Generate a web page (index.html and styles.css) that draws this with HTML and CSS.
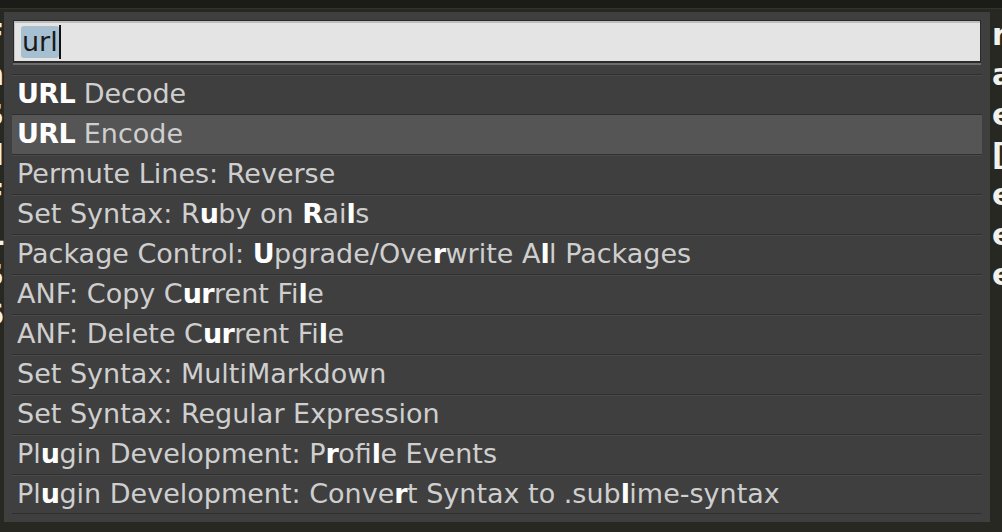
FILE: index.html
```html
<!DOCTYPE html>
<html>
<head>
<meta charset="utf-8">
<link rel="stylesheet" href="styles.css">
</head>
<body>
<div class="screen">
  <div class="topbar"></div>
  <div class="editor">
    <div class="eline"><span class="l">F</span><span class="r">r</span></div>
    <div class="eline"><span class="l">n</span><span class="r">a</span></div>
    <div class="eline"><span class="l">S</span><span class="r">e</span></div>
    <div class="eline"><span class="l">H</span><span class="r">[</span></div>
    <div class="eline"><span class="l">F</span><span class="r">e</span></div>
    <div class="eline"><span class="l">L</span><span class="r">e</span></div>
    <div class="eline"><span class="l">S</span><span class="r">e</span></div>
    <div class="eline"><span class="l">6</span><span class="r"></span></div>
  </div>
  <div class="panel">
    <div class="search">
      <div class="input"><span class="sel">url</span><span class="caret"></span></div>
    </div>
    <ul class="list">
      <li class="item"><b>URL</b> Decode</li>
      <li class="item active"><b>URL</b> Encode</li>
      <li class="item">Permute Lines: Reverse</li>
      <li class="item">Set Syntax: R<b>u</b>by on <b>R</b>ai<b>l</b>s</li>
      <li class="item">Package Control: <b>U</b>pgrade/Ove<b>r</b>write A<b>l</b>l Packages</li>
      <li class="item">ANF: Copy C<b>ur</b>rent Fi<b>l</b>e</li>
      <li class="item">ANF: Delete C<b>ur</b>rent Fi<b>l</b>e</li>
      <li class="item">Set Syntax: MultiMarkdown</li>
      <li class="item">Set Syntax: Regular Expression</li>
      <li class="item">Pl<b>u</b>gin Development: P<b>r</b>ofi<b>l</b>e Events</li>
      <li class="item">Pl<b>u</b>gin Development: Conve<b>r</b>t Syntax to .sub<b>l</b>ime-syntax</li>
    </ul>
  </div>
</div>
</body>
</html>
```

FILE: styles.css
```css
* { box-sizing: border-box; }
html, body { margin: 0; padding: 0; }
body {
  width: 1002px;
  height: 532px;
  overflow: hidden;
  background: #272822;
  font-family: "DejaVu Sans", sans-serif;
}
.screen {
  position: relative;
  width: 1002px;
  height: 532px;
}
.topbar {
  height: 9px;
  background: #1b1b18;
  border-bottom: 1px solid #34342f;
}
.editor {
  display: flex;
  flex-direction: column;
  padding-top: 6px;
}
.eline {
  display: flex;
  justify-content: space-between;
  height: 40px;
  font-size: 30px;
  line-height: 40px;
  color: #f2f2ec;
  font-weight: bold;
}
.eline .l {
  width: 4px;
  overflow: hidden;
  direction: rtl;
  white-space: nowrap;
}
.eline .r {
  width: 12px;
  overflow: hidden;
  white-space: nowrap;
  padding-left: 2px;
}
.panel {
  position: absolute;
  left: 4px;
  top: 12px;
  width: 986px;
  height: 510px;
  background: #3f3f3f;
  padding: 8px 8px 0 8px;
}
.search {
  margin: 0 1px 0 1px;
  border-bottom: 2px solid #6c6c6c;
}
.input {
  height: 43px;
  background: #e4e4e4;
  border: 1px solid #2a2a2a;
  border-bottom-width: 2px;
  box-shadow: inset 0 2px 0 #bdbdbd, inset 1px 0 0 #c4c4c4;
  display: flex;
  align-items: center;
  padding: 1px 0 0 7px;
  font-size: 27px;
  color: #1a1a1a;
}
.sel {
  background: #a6c0d2;
  border-radius: 3px;
  line-height: 32px;
  padding: 0 1px;
}
.caret {
  width: 2px;
  height: 34px;
  background: #111;
}
.list {
  list-style: none;
  margin: 9px 0 0 0;
  padding: 0;
  width: 970px;
}
.item {
  height: 40px;
  border-top: 1px solid #2f2f2f;
  box-shadow: inset 0 1px 0 #4a4a4a;
  padding: 1px 0 0 5px;
  font-size: 27px;
  line-height: 36px;
  color: #cfcfcf;
  white-space: nowrap;
}
.item b {
  color: #ffffff;
  font-weight: bold;
  letter-spacing: -0.6px;
}
.item.active {
  background: #555555;
  box-shadow: none;
}
.item:last-child {
  border-bottom: 1px solid #2f2f2f;
}
```
